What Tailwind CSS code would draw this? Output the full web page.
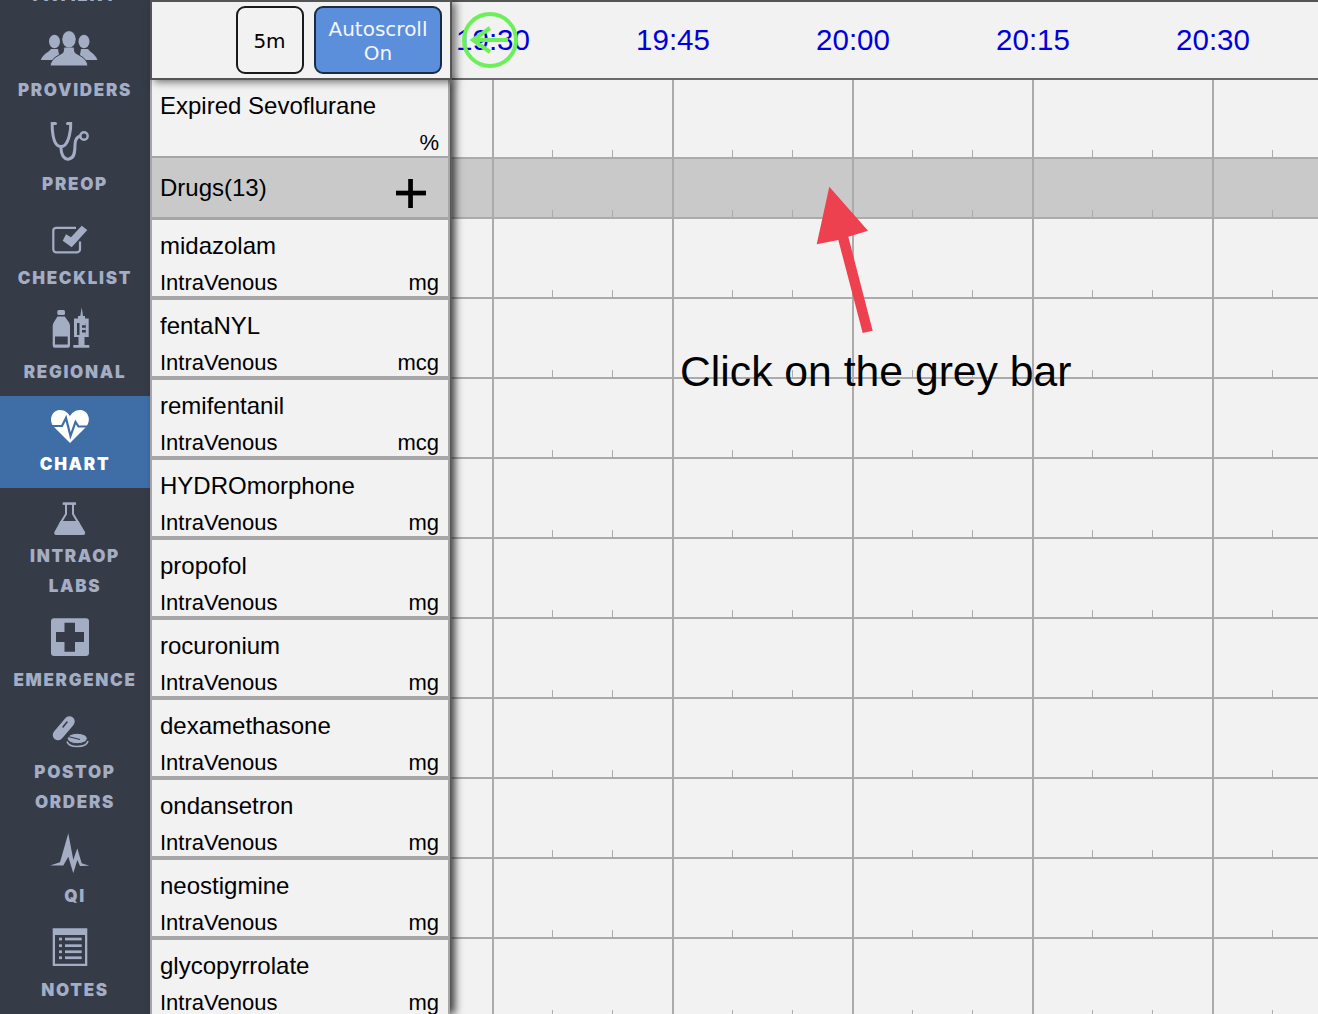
<!DOCTYPE html>
<html>
<head>
<meta charset="utf-8">
<script src="https://cdn.jsdelivr.net/npm/@tailwindcss/browser@4"></script>
</head>
<body class="m-0 bg-[#f2f2f2]">
<div class="relative flex h-[1014px] w-[1318px] overflow-hidden font-['Liberation_Sans',sans-serif] text-black">

  <!-- Sidebar -->
  <nav class="flex w-[150px] shrink-0 flex-col overflow-hidden bg-[#363b48] font-['Inter',sans-serif] text-[17px] font-black leading-[30px] tracking-[1.7px] text-[#a3adc4]">
    <div class="h-[21px] shrink-0 text-center"><div class="-mt-[20px]">PATIENT</div></div>

    <a class="flex h-[94px] shrink-0 flex-col items-center pt-[2px]">
      <svg class="mr-[10px] h-[48px] w-[60px] shrink-0" viewBox="40 23 60 48" fill="#a3adc4">
        <ellipse cx="54.5" cy="41.5" rx="5.5" ry="6.7"/><path d="M41 59.5C43 54 49 52 51 49H58L60 60H41Z"/>
        <ellipse cx="84" cy="41.5" rx="5.5" ry="6.7"/><path d="M97.3 59.5C95 54 90 52 88 49H81L79 60H97.3Z"/>
        <ellipse cx="69" cy="39" rx="7" ry="8.3" stroke="#363b48" stroke-width="1"/>
        <path d="M50 66C51 58 58 56 63 52.5L64 47H74L75 52.5C80 56 87 58 88 66Z" stroke="#363b48" stroke-width="1"/>
        <ellipse cx="69" cy="39.5" rx="6.6" ry="8"/>
      </svg>
      <span class="mt-[4px]">PROVIDERS</span>
    </a>

    <a class="flex h-[94px] shrink-0 flex-col items-center pt-[2px]">
      <svg class="mr-[10px] h-[48px] w-[60px] shrink-0" viewBox="40 117 60 48" fill="none" stroke="#a3adc4" stroke-width="3" stroke-linecap="round">
        <path d="M55.5 123.5H52.2C52 130 53 141 57 145C59 147 63 147 65 145C69 141 71 130 70.7 123.5H67.5"/>
        <path d="M61 147C61 156 65 160 69 159C75 158 75 150 75 145C75 140 77 137 80 136"/>
        <circle cx="84" cy="136" r="3.7" stroke-width="2.4"/>
      </svg>
      <span class="mt-[4px]">PREOP</span>
    </a>

    <a class="flex h-[94px] shrink-0 flex-col items-center pt-[2px]">
      <svg class="mr-[10px] h-[48px] w-[60px] shrink-0" viewBox="40 211 60 48" fill="none">
        <path d="M76 227.8H56A3 3 0 0 0 53.3 231V249A3 3 0 0 0 56 252.3H77A3 3 0 0 0 80 249V241.5" stroke="#a3adc4" stroke-width="2.2"/>
        <polygon points="62.7,240.7 71.7,247.3 87.3,230 81.7,225.7 71,237.3 66,234.3" fill="#a3adc4"/>
      </svg>
      <span class="mt-[4px]">CHECKLIST</span>
    </a>

    <a class="flex h-[93px] shrink-0 flex-col items-center pt-[2px]">
      <svg class="mr-[10px] h-[48px] w-[60px] shrink-0" viewBox="40 305 60 48" fill="#a3adc4">
        <rect x="57.3" y="310" width="7.7" height="5" rx="1.5"/>
        <path d="M57.5 316.5H64.8L69 322.5Q70 324 70 326V345.5Q70 347.7 68 347.7H54.7Q52.7 347.7 52.7 345.5V326Q52.7 324 53.7 322.5Z"/>
        <rect x="55" y="336.5" width="12.7" height="8" fill="#363b48"/>
        <path d="M81.7 307.3L83 316H85V318.5H88.7V337H84.5V345H89.3V347.7H73.3V345H78.5V337H74V318.5H78V316H80.3Z"/>
        <rect x="77" y="323" width="8.8" height="12" fill="#363b48"/>
        <path d="M79.5 323H85.8V325.2H82V327.7H85.8V329.9H82V332.4H85.8V335H79.5Z"/>
      </svg>
      <span class="mt-[4px]">REGIONAL</span>
    </a>

    <a class="flex h-[92px] shrink-0 flex-col items-center bg-[#3f6ea6] pt-[2px] text-white">
      <svg class="mr-[10px] h-[48px] w-[60px] shrink-0" viewBox="40 398 60 48">
        <path d="M70 443L54 427C48 420 52 410 60 410C65 410 68 413 70 416C72 413 75 410 80 410C88 410 92 420 86 427Z" fill="#fff"/>
        <path d="M50 426H62L66 418L70.5 436L75.5 422L78.5 426.5H91" fill="none" stroke="#3f6ea6" stroke-width="2.2"/>
      </svg>
      <span class="mt-[3px]">CHART</span>
    </a>

    <a class="flex h-[123px] shrink-0 flex-col items-center pt-[2px] text-center">
      <svg class="mr-[10px] h-[48px] w-[60px] shrink-0" viewBox="40 490 60 48" fill="#a3adc4">
        <rect x="62.7" y="502.3" width="13.3" height="2.6"/>
        <path d="M66 504V514L60 524M73 504V514L79 524" fill="none" stroke="#a3adc4" stroke-width="2"/>
        <path d="M60.5 521H78.5L85 532Q85.7 535 83 535H56.3Q53.6 535 54.4 532Z"/>
      </svg>
      <span class="mt-[3px]">INTRAOP<br>LABS</span>
    </a>

    <a class="flex h-[93px] shrink-0 flex-col items-center pt-[2px]">
      <svg class="mr-[10px] h-[48px] w-[60px] shrink-0" viewBox="40 613 60 48">
        <rect x="51" y="618.3" width="38" height="37.7" rx="3" fill="#a3adc4"/>
        <polygon points="64.5,622.7 75,622.7 75,632 84,632 84,642 75,642 75,651.7 64.5,651.7 64.5,642 56,642 56,632 64.5,632" fill="#363b48"/>
      </svg>
      <span class="mt-[4px]">EMERGENCE</span>
    </a>

    <a class="flex h-[123px] shrink-0 flex-col items-center pt-[2px] text-center">
      <svg class="mr-[10px] h-[48px] w-[60px] shrink-0" viewBox="40 706 60 48" fill="none">
        <path d="M58 735L69.5 721.5" stroke="#a3adc4" stroke-width="10.5" stroke-linecap="round"/>
        <path d="M63 727L67 722" stroke="#363b48" stroke-width="1.5" stroke-linecap="round"/>
        <ellipse cx="77.3" cy="738.5" rx="10" ry="5.2" fill="#a3adc4" stroke="#363b48" stroke-width="1"/>
        <path d="M68 736.5L80 739.5" stroke="#363b48" stroke-width="1.2"/>
        <path d="M67 741.5C68 745 73 746.5 77.3 746.5C82 746.5 87 745 88 741" stroke="#a3adc4" stroke-width="1.6"/>
      </svg>
      <span class="mt-[3px]">POSTOP<br>ORDERS</span>
    </a>

    <a class="flex h-[94px] shrink-0 flex-col items-center pt-[2px]">
      <svg class="mr-[10px] h-[48px] w-[60px] shrink-0" viewBox="40 829 60 48" fill="#a3adc4">
        <polygon points="50,865.5 60,862.3 68.3,833.3 73.3,860 77.3,848.3 81.7,863.3 89.3,865.7 80,866 77.3,860 73.3,873.3 68.3,856.7 63.3,865.5"/>
      </svg>
      <span class="mt-[4px]">QI</span>
    </a>

    <a class="flex h-[94px] shrink-0 flex-col items-center pt-[2px]">
      <svg class="mr-[10px] h-[48px] w-[60px] shrink-0" viewBox="40 923 60 48" fill="#a3adc4">
        <path fill-rule="evenodd" d="M52.7 928.3H87.3V966H52.7ZM55 935V963.7H85V935Z"/>
        <rect x="59" y="937.7" width="3" height="2.7"/><rect x="65" y="937.7" width="16.7" height="2.7"/>
        <rect x="59" y="944.3" width="3" height="2.7"/><rect x="65" y="944.3" width="16.7" height="2.7"/>
        <rect x="59" y="950.4" width="3" height="2.7"/><rect x="65" y="950.4" width="16.7" height="2.7"/>
        <rect x="59" y="956.4" width="3" height="2.7"/><rect x="65" y="956.4" width="16.7" height="2.7"/>
      </svg>
      <span class="mt-[4px]">NOTES</span>
    </a>
  </nav>

  <!-- Left column: header + labels -->
  <div class="relative z-10 flex w-[302px] shrink-0 flex-col">
    <div class="relative z-10 flex h-[80px] shrink-0 items-center justify-end gap-[10px] border-2 border-[#555] bg-[#f2f2f2] pr-[8px] font-['DejaVu_Sans',sans-serif] shadow-[4px_2px_8px_rgba(0,0,0,0.55)]">
      <button class="flex h-[68px] w-[68px] items-center justify-center rounded-[9px] border-2 border-[#1a1a1a] bg-[#f2f2f2] pr-[1px] pt-[1px] text-[20px]">5m</button>
      <button class="flex h-[68px] w-[128px] items-center justify-center rounded-[9px] border-2 border-[#1c2b45] bg-[#5b8fdb] pt-[1px] text-[20px] leading-[24px] text-[#f4f7fc]">Autoscroll<br>On</button>
    </div>
    <div class="flex w-[300px] flex-1 flex-col overflow-hidden border-x-2 border-[#a6a6a6] bg-[#f2f2f2] shadow-[5px_0_8px_rgba(0,0,0,0.75)]">
      <div class="flex h-[78px] shrink-0 flex-col border-b-2 border-[#a6a6a6] pl-[8px] pr-[9px]">
        <div class="pt-[11px] text-[24px] leading-[30px]">Expired Sevoflurane</div>
        <div class="mt-auto text-right text-[22px] leading-[26px]">%</div>
      </div>
      <div class="flex h-[62px] shrink-0 items-start justify-between border-b-[3px] border-[#a6a6a6] bg-[#c9c9c9] pl-[8px] pr-[22px]">
        <span class="pt-[15px] text-[24px] leading-[30px]">Drugs(13)</span>
        <svg class="mt-[21px] h-[29px] w-[30px]" viewBox="0 0 30 29"><rect x="0" y="11.7" width="30" height="4.7"/><rect x="12.2" y="0" width="4.7" height="29"/></svg>
      </div>
      <div class="flex h-[80px] shrink-0 flex-col border-b-4 border-[#a6a6a6] pl-[8px] pr-[9px]"><div class="pt-[11px] text-[24px] leading-[30px]">midazolam</div><div class="mt-auto flex justify-between text-[22px] leading-[26px]"><span>IntraVenous</span><span>mg</span></div></div>
      <div class="flex h-[80px] shrink-0 flex-col border-b-4 border-[#a6a6a6] pl-[8px] pr-[9px]"><div class="pt-[11px] text-[24px] leading-[30px]">fentaNYL</div><div class="mt-auto flex justify-between text-[22px] leading-[26px]"><span>IntraVenous</span><span>mcg</span></div></div>
      <div class="flex h-[80px] shrink-0 flex-col border-b-4 border-[#a6a6a6] pl-[8px] pr-[9px]"><div class="pt-[11px] text-[24px] leading-[30px]">remifentanil</div><div class="mt-auto flex justify-between text-[22px] leading-[26px]"><span>IntraVenous</span><span>mcg</span></div></div>
      <div class="flex h-[80px] shrink-0 flex-col border-b-4 border-[#a6a6a6] pl-[8px] pr-[9px]"><div class="pt-[11px] text-[24px] leading-[30px]">HYDROmorphone</div><div class="mt-auto flex justify-between text-[22px] leading-[26px]"><span>IntraVenous</span><span>mg</span></div></div>
      <div class="flex h-[80px] shrink-0 flex-col border-b-4 border-[#a6a6a6] pl-[8px] pr-[9px]"><div class="pt-[11px] text-[24px] leading-[30px]">propofol</div><div class="mt-auto flex justify-between text-[22px] leading-[26px]"><span>IntraVenous</span><span>mg</span></div></div>
      <div class="flex h-[80px] shrink-0 flex-col border-b-4 border-[#a6a6a6] pl-[8px] pr-[9px]"><div class="pt-[11px] text-[24px] leading-[30px]">rocuronium</div><div class="mt-auto flex justify-between text-[22px] leading-[26px]"><span>IntraVenous</span><span>mg</span></div></div>
      <div class="flex h-[80px] shrink-0 flex-col border-b-4 border-[#a6a6a6] pl-[8px] pr-[9px]"><div class="pt-[11px] text-[24px] leading-[30px]">dexamethasone</div><div class="mt-auto flex justify-between text-[22px] leading-[26px]"><span>IntraVenous</span><span>mg</span></div></div>
      <div class="flex h-[80px] shrink-0 flex-col border-b-4 border-[#a6a6a6] pl-[8px] pr-[9px]"><div class="pt-[11px] text-[24px] leading-[30px]">ondansetron</div><div class="mt-auto flex justify-between text-[22px] leading-[26px]"><span>IntraVenous</span><span>mg</span></div></div>
      <div class="flex h-[80px] shrink-0 flex-col border-b-4 border-[#a6a6a6] pl-[8px] pr-[9px]"><div class="pt-[11px] text-[24px] leading-[30px]">neostigmine</div><div class="mt-auto flex justify-between text-[22px] leading-[26px]"><span>IntraVenous</span><span>mg</span></div></div>
      <div class="flex h-[80px] shrink-0 flex-col border-b-4 border-[#a6a6a6] pl-[8px] pr-[9px]"><div class="pt-[11px] text-[24px] leading-[30px]">glycopyrrolate</div><div class="mt-auto flex justify-between text-[22px] leading-[26px]"><span>IntraVenous</span><span>mg</span></div></div>
    </div>
  </div>

  <!-- Chart -->
  <div class="flex min-w-0 flex-1 flex-col overflow-hidden bg-[#f2f2f2]">
    <div class="flex h-[80px] shrink-0 items-center border-y-2 border-b-[#6a6a6a] border-t-[#555] text-[29.5px] text-[#0000dc]">
      <div class="-ml-[49px] flex">
        <span class="w-[180px] shrink-0 text-center">19:30</span>
        <span class="w-[180px] shrink-0 text-center">19:45</span>
        <span class="w-[180px] shrink-0 text-center">20:00</span>
        <span class="w-[180px] shrink-0 text-center">20:15</span>
        <span class="w-[180px] shrink-0 text-center">20:30</span>
      </div>
    </div>
    <div class="h-[79px] shrink-0 border-b-2 border-[#ababab] bg-[linear-gradient(to_right,#ababab_0,#ababab_2px,transparent_2px),linear-gradient(to_right,transparent_60px,#ababab_60px,#ababab_61px,transparent_61px,transparent_120px,#ababab_120px,#ababab_121px,transparent_121px)] bg-repeat-x [background-position:40px_0,40px_100%] [background-size:180px_100%,180px_7px]"></div>
    <div class="h-[60px] shrink-0 border-b-2 border-[#ababab] bg-[#c9c9c9] bg-[linear-gradient(to_right,#ababab_0,#ababab_2px,transparent_2px),linear-gradient(to_right,transparent_60px,#ababab_60px,#ababab_61px,transparent_61px,transparent_120px,#ababab_120px,#ababab_121px,transparent_121px)] bg-repeat-x [background-position:40px_0,40px_100%] [background-size:180px_100%,180px_7px]"></div>
    <div class="h-[80px] shrink-0 border-b-2 border-[#ababab] bg-[linear-gradient(to_right,#ababab_0,#ababab_2px,transparent_2px),linear-gradient(to_right,transparent_60px,#ababab_60px,#ababab_61px,transparent_61px,transparent_120px,#ababab_120px,#ababab_121px,transparent_121px)] bg-repeat-x [background-position:40px_0,40px_100%] [background-size:180px_100%,180px_7px]"></div>
    <div class="h-[80px] shrink-0 border-b-2 border-[#ababab] bg-[linear-gradient(to_right,#ababab_0,#ababab_2px,transparent_2px),linear-gradient(to_right,transparent_60px,#ababab_60px,#ababab_61px,transparent_61px,transparent_120px,#ababab_120px,#ababab_121px,transparent_121px)] bg-repeat-x [background-position:40px_0,40px_100%] [background-size:180px_100%,180px_7px]"></div>
    <div class="h-[80px] shrink-0 border-b-2 border-[#ababab] bg-[linear-gradient(to_right,#ababab_0,#ababab_2px,transparent_2px),linear-gradient(to_right,transparent_60px,#ababab_60px,#ababab_61px,transparent_61px,transparent_120px,#ababab_120px,#ababab_121px,transparent_121px)] bg-repeat-x [background-position:40px_0,40px_100%] [background-size:180px_100%,180px_7px]"></div>
    <div class="h-[80px] shrink-0 border-b-2 border-[#ababab] bg-[linear-gradient(to_right,#ababab_0,#ababab_2px,transparent_2px),linear-gradient(to_right,transparent_60px,#ababab_60px,#ababab_61px,transparent_61px,transparent_120px,#ababab_120px,#ababab_121px,transparent_121px)] bg-repeat-x [background-position:40px_0,40px_100%] [background-size:180px_100%,180px_7px]"></div>
    <div class="h-[80px] shrink-0 border-b-2 border-[#ababab] bg-[linear-gradient(to_right,#ababab_0,#ababab_2px,transparent_2px),linear-gradient(to_right,transparent_60px,#ababab_60px,#ababab_61px,transparent_61px,transparent_120px,#ababab_120px,#ababab_121px,transparent_121px)] bg-repeat-x [background-position:40px_0,40px_100%] [background-size:180px_100%,180px_7px]"></div>
    <div class="h-[80px] shrink-0 border-b-2 border-[#ababab] bg-[linear-gradient(to_right,#ababab_0,#ababab_2px,transparent_2px),linear-gradient(to_right,transparent_60px,#ababab_60px,#ababab_61px,transparent_61px,transparent_120px,#ababab_120px,#ababab_121px,transparent_121px)] bg-repeat-x [background-position:40px_0,40px_100%] [background-size:180px_100%,180px_7px]"></div>
    <div class="h-[80px] shrink-0 border-b-2 border-[#ababab] bg-[linear-gradient(to_right,#ababab_0,#ababab_2px,transparent_2px),linear-gradient(to_right,transparent_60px,#ababab_60px,#ababab_61px,transparent_61px,transparent_120px,#ababab_120px,#ababab_121px,transparent_121px)] bg-repeat-x [background-position:40px_0,40px_100%] [background-size:180px_100%,180px_7px]"></div>
    <div class="h-[80px] shrink-0 border-b-2 border-[#ababab] bg-[linear-gradient(to_right,#ababab_0,#ababab_2px,transparent_2px),linear-gradient(to_right,transparent_60px,#ababab_60px,#ababab_61px,transparent_61px,transparent_120px,#ababab_120px,#ababab_121px,transparent_121px)] bg-repeat-x [background-position:40px_0,40px_100%] [background-size:180px_100%,180px_7px]"></div>
    <div class="h-[80px] shrink-0 border-b-2 border-[#ababab] bg-[linear-gradient(to_right,#ababab_0,#ababab_2px,transparent_2px),linear-gradient(to_right,transparent_60px,#ababab_60px,#ababab_61px,transparent_61px,transparent_120px,#ababab_120px,#ababab_121px,transparent_121px)] bg-repeat-x [background-position:40px_0,40px_100%] [background-size:180px_100%,180px_7px]"></div>
    <div class="h-[80px] shrink-0 border-b-2 border-[#ababab] bg-[linear-gradient(to_right,#ababab_0,#ababab_2px,transparent_2px),linear-gradient(to_right,transparent_60px,#ababab_60px,#ababab_61px,transparent_61px,transparent_120px,#ababab_120px,#ababab_121px,transparent_121px)] bg-repeat-x [background-position:40px_0,40px_100%] [background-size:180px_100%,180px_7px]"></div>
  </div>

  <!-- Overlays: annotation marks on the picture -->
  <svg class="absolute left-0 top-0 z-20 h-[1014px] w-[1318px]" viewBox="0 0 1318 1014" fill="none">
    <circle cx="490" cy="40" r="26" stroke="#6cf05a" stroke-width="4"/>
    <path d="M490 28L473 40L490 52M473 40H508" stroke="#6cf05a" stroke-width="4"/>
    <polygon points="829.3,186.7 868,230.7 848.3,236.7 872.7,330.7 862.7,333 838.3,240 816.7,244.3" fill="#ee4150"/>
  </svg>
  <div class="absolute left-[680px] top-[344px] z-20 text-[42.7px] leading-[54px]">Click on the grey bar</div>
</div>
</body>
</html>
